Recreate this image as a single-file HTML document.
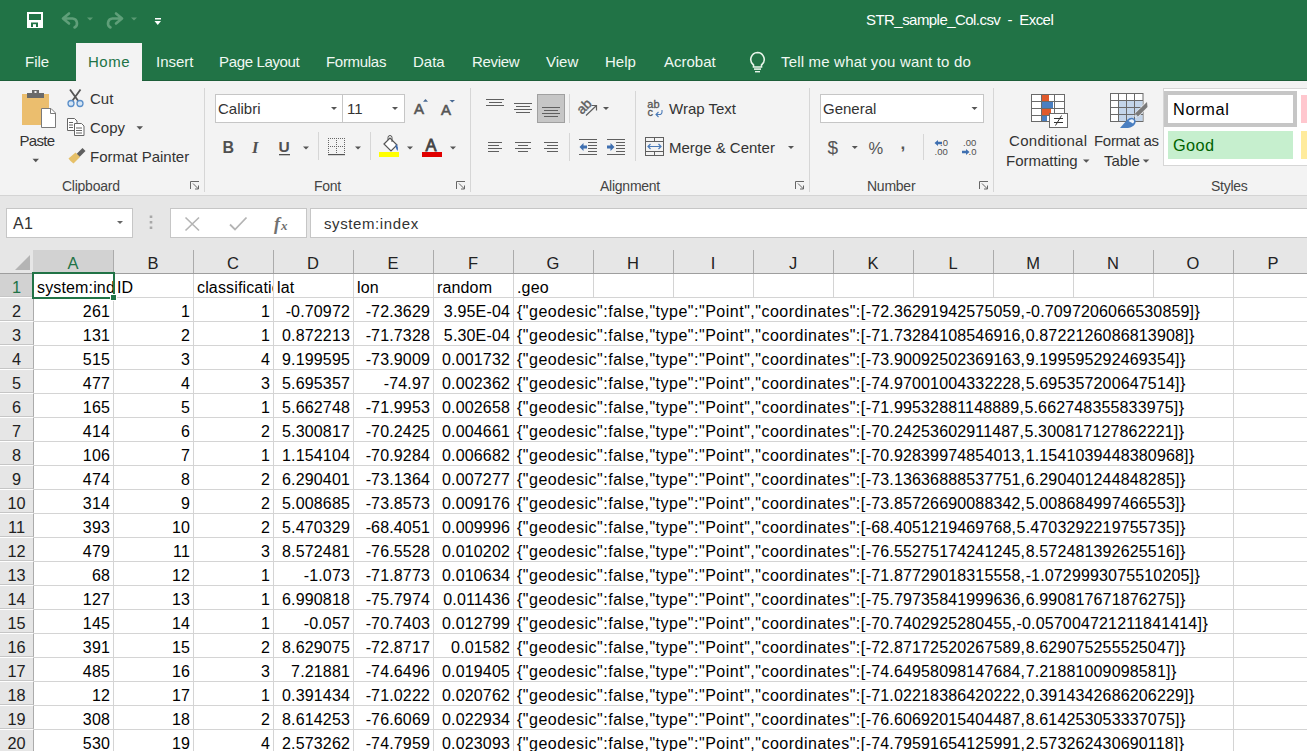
<!DOCTYPE html>
<html><head><meta charset="utf-8">
<style>
*{box-sizing:border-box;margin:0;padding:0}
html,body{width:1307px;height:751px;overflow:hidden;background:#fff;font-family:"Liberation Sans",sans-serif;position:relative}
.a{position:absolute;white-space:nowrap}
#title{position:absolute;left:0;top:0;width:1307px;height:81px;background:#217346}
#ribbon{position:absolute;left:0;top:81px;width:1307px;height:114px;background:#f3f3f3}
#rbline{position:absolute;left:0;top:195px;width:1307px;height:1px;background:#d4d4d4}
#fbar{position:absolute;left:0;top:196px;width:1307px;height:77px;background:#e6e6e6}
.tab{position:absolute;top:53px;font-size:15px;color:#f0f8f2;line-height:18px;white-space:nowrap}
.rt{position:absolute;font-size:15px;color:#333;line-height:18px;white-space:nowrap}
.gl{position:absolute;top:179px;font-size:14px;color:#444;line-height:14px;white-space:nowrap;letter-spacing:-0.25px}
.sep{position:absolute;width:1px;background:#d6d6d6}
.box{position:absolute;background:#fff;border:1px solid #c6c6c6}
.dd{position:absolute;width:0;height:0;border-left:4px solid transparent;border-right:4px solid transparent;border-top:4px solid #666}
/* grid */
.vl{position:absolute;width:1px;background:#d4d4d4}
.hl{position:absolute;left:33px;width:1274px;height:1px;background:#d4d4d4}
.hs{position:absolute;top:250px;width:1px;height:23px;background:#ababab}
.ch{position:absolute;top:250px;width:80px;height:23px;text-align:center;font-size:16.5px;line-height:16px;padding-top:4.5px;color:#222}
.ch.sel{background:#d2d2d2;color:#217346}
.rh{position:absolute;left:0;width:34px;height:23px;text-align:center;font-size:16.3px;line-height:16px;padding-top:4.5px;color:#222;background:#e6e6e6;border-bottom:1px solid #c6c6c6;border-right:1px solid #ababab}
.rh.sel{background:#d2d2d2;color:#217346}
.c{position:absolute;width:80px;height:23px;font-size:16px;letter-spacing:0.15px;line-height:16px;padding-top:7px;color:#000;white-space:nowrap;padding-left:4px;padding-right:3px}
.c.r{text-align:right}
.c.clip{overflow:hidden}
.c.geo{width:auto;letter-spacing:0.15px}
.ls{letter-spacing:0.5px}
.ls2{letter-spacing:0.6px}
</style></head><body>
<div id="title"></div>
<div id="ribbon"></div>
<div id="rbline"></div>
<div id="fbar"></div>

<!-- title bar -->
<div class="a" style="left:866px;top:11px;font-size:15px;color:#fff;letter-spacing:-0.55px;line-height:18px">STR_sample_Col.csv&nbsp; - &nbsp;Excel</div>

<!-- tabs -->
<div class="a" style="left:0;top:80px;width:1307px;height:1px;background:#1d5e39"></div>
<div class="a" style="left:76px;top:43px;width:66px;height:38px;background:#f3f3f3"></div>
<div class="tab" style="left:25px">File</div>
<div class="tab" style="left:88px;color:#217346;letter-spacing:0.5px">Home</div>
<div class="tab" style="left:156px">Insert</div>
<div class="tab" style="left:219px;letter-spacing:-0.35px">Page Layout</div>
<div class="tab" style="left:326px;letter-spacing:-0.3px">Formulas</div>
<div class="tab" style="left:413px">Data</div>
<div class="tab" style="left:472px;letter-spacing:-0.3px">Review</div>
<div class="tab" style="left:546px">View</div>
<div class="tab" style="left:605px">Help</div>
<div class="tab" style="left:664px">Acrobat</div>
<div class="tab" style="left:781px;letter-spacing:0.18px">Tell me what you want to do</div>

<!-- group labels -->
<div class="gl" style="left:62px">Clipboard</div>
<div class="gl" style="left:314px">Font</div>
<div class="gl" style="left:600px">Alignment</div>
<div class="gl" style="left:867px">Number</div>
<div class="gl" style="left:1211px">Styles</div>
<div class="sep" style="left:204px;top:88px;height:104px"></div>
<div class="sep" style="left:470px;top:88px;height:104px"></div>
<div class="sep" style="left:809px;top:88px;height:104px"></div>
<div class="sep" style="left:993px;top:88px;height:104px"></div>
<div class="sep" style="left:318px;top:132px;height:28px"></div>
<div class="sep" style="left:370px;top:132px;height:28px"></div>
<div class="sep" style="left:569px;top:94px;height:29px"></div>
<div class="sep" style="left:569px;top:133px;height:28px"></div>
<div class="sep" style="left:635px;top:91px;height:70px"></div>
<div class="sep" style="left:923px;top:134px;height:26px"></div>

<!-- clipboard -->
<div class="rt" style="left:19.5px;top:132px;letter-spacing:-0.7px">Paste</div>
<div class="rt" style="left:90px;top:90px">Cut</div>
<div class="rt" style="left:90px;top:119px">Copy</div>
<div class="rt" style="left:90px;top:148px">Format Painter</div>

<!-- font -->
<div class="box" style="left:215px;top:94px;width:128px;height:29px"></div>
<div class="box" style="left:342px;top:94px;width:63px;height:29px"></div>
<div class="rt" style="left:218px;top:100px">Calibri</div>
<div class="rt" style="left:347px;top:100px">11</div>

<!-- alignment -->
<div class="rt" style="left:669px;top:100px">Wrap Text</div>
<div class="rt" style="left:669px;top:139px">Merge &amp; Center</div>

<!-- number -->
<div class="box" style="left:820px;top:94px;width:164px;height:29px"></div>
<div class="rt" style="left:823px;top:100px">General</div>

<!-- styles -->
<div class="rt" style="left:1009px;top:132px;letter-spacing:0.3px">Conditional</div>
<div class="rt" style="left:1006px;top:152px">Formatting</div>
<div class="rt" style="left:1094px;top:132px;letter-spacing:-0.3px">Format as</div>
<div class="rt" style="left:1104px;top:152px">Table</div>

<!-- formula bar -->
<div class="box" style="left:6px;top:208px;width:127px;height:30px"></div>
<div class="rt" style="left:13px;top:214.5px;font-size:16px;letter-spacing:0.3px">A1</div>
<div class="box" style="left:170px;top:208px;width:137px;height:30px"></div>
<div class="box" style="left:310px;top:208px;width:1000px;height:30px"></div>
<div class="rt" style="left:324px;top:214.5px;font-size:15px;letter-spacing:0.6px">system:index</div>

<!-- styles gallery -->
<div class="a" style="left:1163px;top:88px;width:150px;height:78px;background:#fff;border:1px solid #d6d6d6"></div>
<div class="a" style="left:1164px;top:91px;width:133px;height:36px;background:#fff;border:4px solid #c6c6c6"></div>
<div class="rt" style="left:1173px;top:99.5px;font-size:16.3px;letter-spacing:0.7px;color:#000">Normal</div>
<div class="a" style="left:1168px;top:131px;width:125px;height:28px;background:#c6efce"></div>
<div class="rt" style="left:1173px;top:135.5px;font-size:16.3px;letter-spacing:0.4px;color:#006100">Good</div>
<div class="a" style="left:1301px;top:95px;width:6px;height:28px;background:#ffc7ce"></div>
<div class="a" style="left:1301px;top:131px;width:6px;height:28px;background:#ffeb9c"></div>

<svg class="a" style="left:0;top:0" width="1307" height="273" viewBox="0 0 1307 273">
<!-- QAT save -->
<rect x="27" y="12" width="16" height="16" fill="#fff"/>
<rect x="29" y="14" width="12" height="6" fill="#217346"/>
<rect x="31" y="22.5" width="7" height="4.5" fill="#217346"/>
<rect x="33" y="24.2" width="3" height="2.8" fill="#fff"/>
<!-- undo -->
<path d="M63 18.5 L69 13.5 M63 18.5 L69 23.5 M64 18.5 H72.5 A4.8 4.8 0 0 1 74.5 27.5" fill="none" stroke="#5f9f79" stroke-width="2.6" stroke-linecap="round"/>
<path d="M87 17.5 L93 17.5 L90 20.5Z" fill="#5a9a74"/>
<!-- redo -->
<path d="M122 18.5 L116 13.5 M122 18.5 L116 23.5 M121 18.5 H112.5 A4.8 4.8 0 0 0 110.5 27.5" fill="none" stroke="#5f9f79" stroke-width="2.6" stroke-linecap="round"/>
<path d="M131 17.5 L137 17.5 L134 20.5Z" fill="#5a9a74"/>
<!-- customize -->
<rect x="155" y="18" width="6" height="1.5" fill="#fff"/>
<path d="M154.5 21 L161 21 L157.75 25Z" fill="#fff"/>
<!-- lightbulb -->
<path d="M757.5 52.5 A7 7 0 0 1 761.5 65 V67 H753.5 V65 A7 7 0 0 1 757.5 52.5Z" fill="none" stroke="#e8f5ea" stroke-width="1.6"/>
<rect x="754" y="68.3" width="7" height="1.6" fill="#e8f5ea"/>
<rect x="755" y="71" width="5" height="1.4" fill="#e8f5ea"/>

<!-- Clipboard paste -->
<rect x="22" y="94" width="27" height="31" fill="#ebbe6e"/>
<rect x="27" y="93" width="17" height="5" fill="#6a6a6a"/>
<rect x="32" y="90" width="7" height="4" fill="#6a6a6a"/>
<rect x="34.5" y="91" width="2" height="2" fill="#f3f3f3"/>
<path d="M41.5 108.5 H51 L55.5 113 V127.5 H41.5Z" fill="#fff" stroke="#7a7a7a" stroke-width="1"/>
<path d="M50.5 108.5 V113.5 H55.5" fill="none" stroke="#7a7a7a" stroke-width="1"/>
<path d="M32.5 158.8 L39 158.8 L35.75 162.2Z" fill="#555"/>
<path d="M136.5 126.3 L143 126.3 L139.75 129.7Z" fill="#555"/>
<!-- scissors -->
<path d="M70 89.5 L79 102 M80.5 89.5 L71.5 102" stroke="#555" stroke-width="1.8" fill="none"/>
<circle cx="71" cy="103.5" r="3" fill="#d6e6f5" stroke="#5b8fc9" stroke-width="1.3"/>
<circle cx="80" cy="103.5" r="3" fill="#d6e6f5" stroke="#5b8fc9" stroke-width="1.3"/>
<!-- copy -->
<path d="M67.5 118.5 H74.5 L77 121 V130.5 H67.5Z" fill="#fff" stroke="#666" stroke-width="1"/>
<path d="M74.5 123.5 H81.5 L84 126 V135.5 H74.5Z" fill="#fff" stroke="#666" stroke-width="1"/>
<path d="M69 122.5 H73 M69 125 H73 M69 127.5 H73 M76 128 H82 M76 130.5 H82 M76 133 H82" stroke="#666" stroke-width="1"/>
<!-- format painter -->
<path d="M78 155.5 L84 149.5" stroke="#5f5f5f" stroke-width="4.2"/>
<path d="M68.5 158.5 L75.5 152.5 L80 157 L73.5 163.5 Q70 161 68.5 158.5Z" fill="#e6c068"/>

<!-- Font box arrows -->
<path d="M331 107 L337 107 L334 110Z" fill="#555"/>
<path d="M392 107 L398 107 L395 110Z" fill="#555"/>
<!-- grow / shrink -->
<text x="414" y="114.3" font-family="Liberation Sans" font-size="15" fill="#555" stroke="#555" stroke-width="0.6">A</text>
<path d="M423 101.8 L428 101.8 L425.5 99Z" fill="#4a6a94"/>
<text x="441" y="115" font-family="Liberation Sans" font-size="15" fill="#555" stroke="#555" stroke-width="0.6">A</text>
<path d="M449.5 100 L455 100 L452.25 102.5Z" fill="#4a6a94"/>
<!-- B I U -->
<text x="222.5" y="153" font-family="Liberation Sans" font-weight="bold" font-size="16" fill="#505050">B</text>
<text x="252" y="153" font-family="Liberation Serif" font-style="italic" font-weight="bold" font-size="16.5" fill="#505050">I</text>
<text x="278.5" y="152.3" font-family="Liberation Sans" font-weight="bold" font-size="15.5" fill="#505050">U</text>
<rect x="279" y="154" width="11" height="1.3" fill="#505050"/>
<path d="M303 146.5 L309 146.5 L306 149.5Z" fill="#555"/>
<!-- borders -->
<path d="M328 138.5 H346 M328 146.5 H346 M328.5 138 V154 M336.5 138 V154 M344.5 138 V154" stroke="#666" stroke-width="1" stroke-dasharray="1 1" fill="none"/>
<rect x="328" y="154" width="17" height="1.2" fill="#555"/>
<path d="M355 146.5 L361 146.5 L358 149.5Z" fill="#555"/>
<!-- fill color -->
<path d="M384 144 L390 138 L397 145 L391 151Z" fill="#fff" stroke="#555" stroke-width="1.2"/>
<path d="M388 140 V137.5 A2 2 0 0 1 392 137.5 V142" fill="none" stroke="#555" stroke-width="1"/>
<path d="M396 144 Q399 147 397.5 151 Q396 149 395.5 146Z" fill="#3e6db3"/>
<rect x="379" y="152" width="20" height="5" fill="#ffff00"/>
<path d="M407 146.5 L413 146.5 L410 149.5Z" fill="#555"/>
<!-- font color -->
<text x="425.5" y="151" font-family="Liberation Sans" font-size="16.5" fill="#444" stroke="#444" stroke-width="0.8">A</text>
<rect x="422" y="152" width="20" height="5" fill="#e00000"/>
<path d="M450 146.5 L456 146.5 L453 149.5Z" fill="#555"/>

<!-- launchers -->
<g fill="none" stroke="#666" stroke-width="1">
<path d="M190.5 189 V181.5 H199"/><path d="M193 183.5 L198.5 189 M198.5 185.5 V189 H195"/>
<path d="M456.5 189 V181.5 H465"/><path d="M459 183.5 L464.5 189 M464.5 185.5 V189 H461"/>
<path d="M795.5 189 V181.5 H804"/><path d="M798 183.5 L803.5 189 M803.5 185.5 V189 H800"/>
<path d="M979.5 189 V181.5 H988"/><path d="M982 183.5 L987.5 189 M987.5 185.5 V189 H984"/>
</g>

<!-- alignment -->
<g stroke="#5f5f5f" stroke-width="1.2" fill="none">
<path d="M486 99.5 H504 M489 102.5 H502 M486 105.5 H504"/>
<path d="M514 103.5 H532 M516 106.5 H530 M514 109.5 H532 M516 112.5 H530"/>
</g>
<rect x="537.5" y="94.5" width="27" height="28" fill="#c6c6c6" stroke="#a0a0a0" stroke-width="1"/>
<g stroke="#5f5f5f" stroke-width="1.2" fill="none">
<path d="M542 107.5 H560 M544 110.5 H558 M542 113.5 H560 M544 116.5 H558"/>
<path d="M488 142.5 H502 M488 145.5 H499 M488 148.5 H502 M488 151.5 H499"/>
<path d="M515 142.5 H531 M518 145.5 H528 M515 148.5 H531 M518 151.5 H528"/>
<path d="M544 142.5 H558 M547 145.5 H558 M544 148.5 H558 M547 151.5 H558"/>
<path d="M579 139.5 H597 M588 142.5 H597 M588 145.5 H597 M588 148.5 H597 M588 151.5 H597 M579 154.5 H597"/>
<path d="M607 139.5 H625 M616 142.5 H625 M616 145.5 H625 M616 148.5 H625 M616 151.5 H625 M607 154.5 H625"/>
<path d="M586 115.5 L596.5 105.5 M591.5 105.5 H596.5 V110.5"/>
</g>
<text x="0" y="0" font-family="Liberation Sans" font-size="13.5" fill="#5f5f5f" stroke="#5f5f5f" stroke-width="0.4" transform="translate(582 115) rotate(-45)">ab</text>
<path d="M603 107 L609 107 L606 110Z" fill="#555"/>
<path d="M579.5 147 L583.5 143 V145.5 H587 V148.5 H583.5 V151Z" fill="#3f6fb0"/>
<path d="M614.5 147 L610.5 143 V145.5 H607 V148.5 H610.5 V151Z" fill="#3f6fb0"/>
<!-- wrap text -->
<text x="647.3" y="107.8" font-family="Liberation Sans" font-size="11" fill="#555" stroke="#555" stroke-width="0.3">ab</text>
<text x="647.5" y="116" font-family="Liberation Sans" font-size="11" fill="#555" stroke="#555" stroke-width="0.3">c</text>
<path d="M662 110 V112 A2.5 2.5 0 0 1 659.5 114.5 H656 M658.5 112 L656 114.5 L658.5 117" fill="none" stroke="#4a7ab8" stroke-width="1.1"/>
<!-- merge -->
<g fill="none" stroke="#5f5f5f" stroke-width="1">
<rect x="645.5" y="137.5" width="18" height="18"/>
<path d="M645.5 141.5 H663.5 M645.5 151.5 H663.5 M654.5 137.5 V141.5 M654.5 151.5 V155.5"/>
</g>
<path d="M648 146.5 H661 M650.5 144 L648 146.5 L650.5 149 M658.5 144 L661 146.5 L658.5 149" fill="none" stroke="#4a7ab8" stroke-width="1.2"/>
<path d="M788 146 L794 146 L791 149Z" fill="#555"/>

<!-- number -->
<path d="M971.5 107 L977.5 107 L974.5 110Z" fill="#555"/>
<text x="827.5" y="154" font-family="Liberation Sans" font-size="19" fill="#555">$</text>
<path d="M851.8 146 L857.8 146 L854.8 149Z" fill="#555"/>
<text x="868.5" y="154" font-family="Liberation Sans" font-size="16.5" fill="#555">%</text>
<text x="900.5" y="149" font-family="Liberation Sans" font-weight="bold" font-size="17" fill="#555">,</text>
<text x="940" y="146" font-family="Liberation Sans" font-size="9.5" fill="#505050">.0</text>
<text x="934.5" y="155" font-family="Liberation Sans" font-size="9.5" fill="#505050">.00</text>
<path d="M934.5 143 L938 140 V141.8 H942 V144.2 H938 V146Z" fill="#3f6fb0"/>
<text x="963" y="146" font-family="Liberation Sans" font-size="9.5" fill="#505050">.00</text>
<text x="968.5" y="155" font-family="Liberation Sans" font-size="9.5" fill="#505050">.0</text>
<path d="M969.5 152 L966 149 V150.8 H962 V153.2 H966 V155Z" fill="#3f6fb0"/>

<!-- conditional formatting -->
<rect x="1031.5" y="94.5" width="33" height="27" fill="#fff" stroke="#6a6a6a" stroke-width="1"/>
<rect x="1042" y="95" width="7" height="6" fill="#e0592b"/>
<rect x="1042" y="102" width="11" height="6" fill="#4a7fc1"/>
<rect x="1042" y="109" width="9" height="6" fill="#e0592b"/>
<rect x="1042" y="116" width="5" height="5" fill="#4a7fc1"/>
<path d="M1031.5 101.5 H1064.5 M1031.5 108.5 H1064.5 M1031.5 115.5 H1064.5 M1041.5 94.5 V121.5 M1054.5 94.5 V121.5" fill="none" stroke="#6a6a6a" stroke-width="1"/>
<rect x="1049.5" y="113.5" width="18" height="14" fill="#fff" stroke="#6a6a6a" stroke-width="1"/>
<path d="M1054 118.5 H1063 M1054 122.5 H1063 M1061.5 115.5 L1055.5 125.5" fill="none" stroke="#333" stroke-width="1"/>
<path d="M1083 159.5 L1089.5 159.5 L1086.25 162.7Z" fill="#555"/>
<!-- format as table -->
<rect x="1110.5" y="93.5" width="32.5" height="28" fill="#fff" stroke="#6a6a6a" stroke-width="1"/>
<rect x="1119" y="101" width="23.5" height="20" fill="#c3d5ea"/>
<path d="M1110.5 100.5 H1143 M1110.5 107.5 H1143 M1110.5 114.5 H1143 M1118.5 93.5 V121.5 M1126.5 93.5 V121.5 M1134.5 93.5 V121.5" fill="none" stroke="#6a6a6a" stroke-width="1"/>
<path d="M1146.5 101.5 L1147.5 107.5 L1138.5 117 L1134.5 113.5Z" fill="#f3f3f3"/>
<path d="M1147 102 L1147.5 107 L1138 116.5 L1135 113.5Z" fill="#7a7a7a"/>
<path d="M1133.5 115 L1136.5 118" stroke="#f3f3f3" stroke-width="1"/>
<path d="M1120 128 L1127 120 Q1130 117 1133 118 Q1137 120 1135 124 Q1133 127 1128 128Z" fill="#4a7fc1"/>
<path d="M1128.5 121 Q1131 118.5 1133.3 119.7 Q1135 121.5 1133 123.5 Z" fill="#eef4fb"/>
<path d="M1142.8 159.5 L1149.3 159.5 L1146 162.7Z" fill="#555"/>

<!-- formula bar icons -->
<path d="M151 215.5 V218 M151 221 V223.5 M151 226.5 V229" stroke="#a8a8a8" stroke-width="2.6"/>
<path d="M185.5 217.5 L199 230.5 M199 217.5 L185.5 230.5" stroke="#b4b4b4" stroke-width="1.6"/>
<path d="M230 224.5 L235 229.5 L246.5 217.5" fill="none" stroke="#b4b4b4" stroke-width="1.8"/>
<text x="274" y="229.5" font-family="Liberation Serif" font-style="italic" font-weight="bold" font-size="18" fill="#707070">f</text>
<text x="281" y="230" font-family="Liberation Serif" font-style="italic" font-weight="bold" font-size="13" fill="#707070">x</text>
<path d="M117 221 L123 221 L120 224Z" fill="#666"/>

<!-- select all triangle -->
<path d="M15 270 L30 255 V270Z" fill="#b4b4b4"/>
</svg>


<!-- grid -->
<div class="hs" style="left:33px"></div>
<div class="vl" style="left:33px;top:274px;height:477px"></div>
<div class="hs" style="left:113px"></div>
<div class="vl" style="left:113px;top:274px;height:477px"></div>
<div class="hs" style="left:193px"></div>
<div class="vl" style="left:193px;top:274px;height:477px"></div>
<div class="hs" style="left:273px"></div>
<div class="vl" style="left:273px;top:274px;height:477px"></div>
<div class="hs" style="left:353px"></div>
<div class="vl" style="left:353px;top:274px;height:477px"></div>
<div class="hs" style="left:433px"></div>
<div class="vl" style="left:433px;top:274px;height:477px"></div>
<div class="hs" style="left:513px"></div>
<div class="vl" style="left:513px;top:274px;height:477px"></div>
<div class="hs" style="left:593px"></div>
<div class="vl" style="left:593px;top:274px;height:23px"></div>
<div class="hs" style="left:673px"></div>
<div class="vl" style="left:673px;top:274px;height:23px"></div>
<div class="hs" style="left:753px"></div>
<div class="vl" style="left:753px;top:274px;height:23px"></div>
<div class="hs" style="left:833px"></div>
<div class="vl" style="left:833px;top:274px;height:23px"></div>
<div class="hs" style="left:913px"></div>
<div class="vl" style="left:913px;top:274px;height:23px"></div>
<div class="hs" style="left:993px"></div>
<div class="vl" style="left:993px;top:274px;height:23px"></div>
<div class="hs" style="left:1073px"></div>
<div class="vl" style="left:1073px;top:274px;height:23px"></div>
<div class="hs" style="left:1153px"></div>
<div class="vl" style="left:1153px;top:274px;height:23px"></div>
<div class="hs" style="left:1233px"></div>
<div class="vl" style="left:1233px;top:274px;height:477px"></div>
<div class="hs" style="left:1313px"></div>
<div class="vl" style="left:1313px;top:274px;height:477px"></div>
<div class="hl" style="top:297px"></div>
<div class="hl" style="top:321px"></div>
<div class="hl" style="top:345px"></div>
<div class="hl" style="top:369px"></div>
<div class="hl" style="top:393px"></div>
<div class="hl" style="top:417px"></div>
<div class="hl" style="top:441px"></div>
<div class="hl" style="top:465px"></div>
<div class="hl" style="top:489px"></div>
<div class="hl" style="top:513px"></div>
<div class="hl" style="top:537px"></div>
<div class="hl" style="top:561px"></div>
<div class="hl" style="top:585px"></div>
<div class="hl" style="top:609px"></div>
<div class="hl" style="top:633px"></div>
<div class="hl" style="top:657px"></div>
<div class="hl" style="top:681px"></div>
<div class="hl" style="top:705px"></div>
<div class="hl" style="top:729px"></div>
<div class="hl" style="top:753px"></div>
<div class="a" style="left:0;top:273px;width:1307px;height:1px;background:#9e9e9e"></div>
<div class="ch sel" style="left:33px">A</div>
<div class="ch" style="left:113px">B</div>
<div class="ch" style="left:193px">C</div>
<div class="ch" style="left:273px">D</div>
<div class="ch" style="left:353px">E</div>
<div class="ch" style="left:433px">F</div>
<div class="ch" style="left:513px">G</div>
<div class="ch" style="left:593px">H</div>
<div class="ch" style="left:673px">I</div>
<div class="ch" style="left:753px">J</div>
<div class="ch" style="left:833px">K</div>
<div class="ch" style="left:913px">L</div>
<div class="ch" style="left:993px">M</div>
<div class="ch" style="left:1073px">N</div>
<div class="ch" style="left:1153px">O</div>
<div class="ch" style="left:1233px">P</div>
<div class="rh sel" style="top:274px">1</div>
<div class="rh" style="top:298px">2</div>
<div class="rh" style="top:322px">3</div>
<div class="rh" style="top:346px">4</div>
<div class="rh" style="top:370px">5</div>
<div class="rh" style="top:394px">6</div>
<div class="rh" style="top:418px">7</div>
<div class="rh" style="top:442px">8</div>
<div class="rh" style="top:466px">9</div>
<div class="rh" style="top:490px">10</div>
<div class="rh" style="top:514px">11</div>
<div class="rh" style="top:538px">12</div>
<div class="rh" style="top:562px">13</div>
<div class="rh" style="top:586px">14</div>
<div class="rh" style="top:610px">15</div>
<div class="rh" style="top:634px">16</div>
<div class="rh" style="top:658px">17</div>
<div class="rh" style="top:682px">18</div>
<div class="rh" style="top:706px">19</div>
<div class="rh" style="top:730px">20</div>
<div class="c l clip" style="left:33px;top:273px">system:index</div>
<div class="c l clip" style="left:113px;top:273px">ID</div>
<div class="c l clip" style="left:193px;top:273px">classification</div>
<div class="c l clip" style="left:273px;top:273px">lat</div>
<div class="c l clip" style="left:353px;top:273px">lon</div>
<div class="c l clip" style="left:433px;top:273px">random</div>
<div class="c l" style="left:513px;top:273px">.geo</div>
<div class="c r" style="left:33px;top:297px">261</div>
<div class="c r" style="left:113px;top:297px">1</div>
<div class="c r" style="left:193px;top:297px">1</div>
<div class="c r" style="left:273px;top:297px">-0.70972</div>
<div class="c r" style="left:353px;top:297px">-72.3629</div>
<div class="c r" style="left:433px;top:297px">3.95E-04</div>
<div class="c l geo" style="left:513px;top:297px"><span class="ls">{"geodesic":false,"type":"Point","coordinates":[</span>-72.36291942575059<span class="ls2">,</span>-0.7097206066530859<span class="ls2">]}</span></div>
<div class="c r" style="left:33px;top:321px">131</div>
<div class="c r" style="left:113px;top:321px">2</div>
<div class="c r" style="left:193px;top:321px">1</div>
<div class="c r" style="left:273px;top:321px">0.872213</div>
<div class="c r" style="left:353px;top:321px">-71.7328</div>
<div class="c r" style="left:433px;top:321px">5.30E-04</div>
<div class="c l geo" style="left:513px;top:321px"><span class="ls">{"geodesic":false,"type":"Point","coordinates":[</span>-71.73284108546916<span class="ls2">,</span>0.8722126086813908<span class="ls2">]}</span></div>
<div class="c r" style="left:33px;top:345px">515</div>
<div class="c r" style="left:113px;top:345px">3</div>
<div class="c r" style="left:193px;top:345px">4</div>
<div class="c r" style="left:273px;top:345px">9.199595</div>
<div class="c r" style="left:353px;top:345px">-73.9009</div>
<div class="c r" style="left:433px;top:345px">0.001732</div>
<div class="c l geo" style="left:513px;top:345px"><span class="ls">{"geodesic":false,"type":"Point","coordinates":[</span>-73.90092502369163<span class="ls2">,</span>9.199595292469354<span class="ls2">]}</span></div>
<div class="c r" style="left:33px;top:369px">477</div>
<div class="c r" style="left:113px;top:369px">4</div>
<div class="c r" style="left:193px;top:369px">3</div>
<div class="c r" style="left:273px;top:369px">5.695357</div>
<div class="c r" style="left:353px;top:369px">-74.97</div>
<div class="c r" style="left:433px;top:369px">0.002362</div>
<div class="c l geo" style="left:513px;top:369px"><span class="ls">{"geodesic":false,"type":"Point","coordinates":[</span>-74.97001004332228<span class="ls2">,</span>5.695357200647514<span class="ls2">]}</span></div>
<div class="c r" style="left:33px;top:393px">165</div>
<div class="c r" style="left:113px;top:393px">5</div>
<div class="c r" style="left:193px;top:393px">1</div>
<div class="c r" style="left:273px;top:393px">5.662748</div>
<div class="c r" style="left:353px;top:393px">-71.9953</div>
<div class="c r" style="left:433px;top:393px">0.002658</div>
<div class="c l geo" style="left:513px;top:393px"><span class="ls">{"geodesic":false,"type":"Point","coordinates":[</span>-71.99532881148889<span class="ls2">,</span>5.662748355833975<span class="ls2">]}</span></div>
<div class="c r" style="left:33px;top:417px">414</div>
<div class="c r" style="left:113px;top:417px">6</div>
<div class="c r" style="left:193px;top:417px">2</div>
<div class="c r" style="left:273px;top:417px">5.300817</div>
<div class="c r" style="left:353px;top:417px">-70.2425</div>
<div class="c r" style="left:433px;top:417px">0.004661</div>
<div class="c l geo" style="left:513px;top:417px"><span class="ls">{"geodesic":false,"type":"Point","coordinates":[</span>-70.24253602911487<span class="ls2">,</span>5.300817127862221<span class="ls2">]}</span></div>
<div class="c r" style="left:33px;top:441px">106</div>
<div class="c r" style="left:113px;top:441px">7</div>
<div class="c r" style="left:193px;top:441px">1</div>
<div class="c r" style="left:273px;top:441px">1.154104</div>
<div class="c r" style="left:353px;top:441px">-70.9284</div>
<div class="c r" style="left:433px;top:441px">0.006682</div>
<div class="c l geo" style="left:513px;top:441px"><span class="ls">{"geodesic":false,"type":"Point","coordinates":[</span>-70.92839974854013<span class="ls2">,</span>1.1541039448380968<span class="ls2">]}</span></div>
<div class="c r" style="left:33px;top:465px">474</div>
<div class="c r" style="left:113px;top:465px">8</div>
<div class="c r" style="left:193px;top:465px">2</div>
<div class="c r" style="left:273px;top:465px">6.290401</div>
<div class="c r" style="left:353px;top:465px">-73.1364</div>
<div class="c r" style="left:433px;top:465px">0.007277</div>
<div class="c l geo" style="left:513px;top:465px"><span class="ls">{"geodesic":false,"type":"Point","coordinates":[</span>-73.13636888537751<span class="ls2">,</span>6.290401244848285<span class="ls2">]}</span></div>
<div class="c r" style="left:33px;top:489px">314</div>
<div class="c r" style="left:113px;top:489px">9</div>
<div class="c r" style="left:193px;top:489px">2</div>
<div class="c r" style="left:273px;top:489px">5.008685</div>
<div class="c r" style="left:353px;top:489px">-73.8573</div>
<div class="c r" style="left:433px;top:489px">0.009176</div>
<div class="c l geo" style="left:513px;top:489px"><span class="ls">{"geodesic":false,"type":"Point","coordinates":[</span>-73.85726690088342<span class="ls2">,</span>5.008684997466553<span class="ls2">]}</span></div>
<div class="c r" style="left:33px;top:513px">393</div>
<div class="c r" style="left:113px;top:513px">10</div>
<div class="c r" style="left:193px;top:513px">2</div>
<div class="c r" style="left:273px;top:513px">5.470329</div>
<div class="c r" style="left:353px;top:513px">-68.4051</div>
<div class="c r" style="left:433px;top:513px">0.009996</div>
<div class="c l geo" style="left:513px;top:513px"><span class="ls">{"geodesic":false,"type":"Point","coordinates":[</span>-68.4051219469768<span class="ls2">,</span>5.4703292219755735<span class="ls2">]}</span></div>
<div class="c r" style="left:33px;top:537px">479</div>
<div class="c r" style="left:113px;top:537px">11</div>
<div class="c r" style="left:193px;top:537px">3</div>
<div class="c r" style="left:273px;top:537px">8.572481</div>
<div class="c r" style="left:353px;top:537px">-76.5528</div>
<div class="c r" style="left:433px;top:537px">0.010202</div>
<div class="c l geo" style="left:513px;top:537px"><span class="ls">{"geodesic":false,"type":"Point","coordinates":[</span>-76.55275174241245<span class="ls2">,</span>8.572481392625516<span class="ls2">]}</span></div>
<div class="c r" style="left:33px;top:561px">68</div>
<div class="c r" style="left:113px;top:561px">12</div>
<div class="c r" style="left:193px;top:561px">1</div>
<div class="c r" style="left:273px;top:561px">-1.073</div>
<div class="c r" style="left:353px;top:561px">-71.8773</div>
<div class="c r" style="left:433px;top:561px">0.010634</div>
<div class="c l geo" style="left:513px;top:561px"><span class="ls">{"geodesic":false,"type":"Point","coordinates":[</span>-71.87729018315558<span class="ls2">,</span>-1.0729993075510205<span class="ls2">]}</span></div>
<div class="c r" style="left:33px;top:585px">127</div>
<div class="c r" style="left:113px;top:585px">13</div>
<div class="c r" style="left:193px;top:585px">1</div>
<div class="c r" style="left:273px;top:585px">6.990818</div>
<div class="c r" style="left:353px;top:585px">-75.7974</div>
<div class="c r" style="left:433px;top:585px">0.011436</div>
<div class="c l geo" style="left:513px;top:585px"><span class="ls">{"geodesic":false,"type":"Point","coordinates":[</span>-75.79735841999636<span class="ls2">,</span>6.990817671876275<span class="ls2">]}</span></div>
<div class="c r" style="left:33px;top:609px">145</div>
<div class="c r" style="left:113px;top:609px">14</div>
<div class="c r" style="left:193px;top:609px">1</div>
<div class="c r" style="left:273px;top:609px">-0.057</div>
<div class="c r" style="left:353px;top:609px">-70.7403</div>
<div class="c r" style="left:433px;top:609px">0.012799</div>
<div class="c l geo" style="left:513px;top:609px"><span class="ls">{"geodesic":false,"type":"Point","coordinates":[</span>-70.7402925280455<span class="ls2">,</span>-0.057004721211841414<span class="ls2">]}</span></div>
<div class="c r" style="left:33px;top:633px">391</div>
<div class="c r" style="left:113px;top:633px">15</div>
<div class="c r" style="left:193px;top:633px">2</div>
<div class="c r" style="left:273px;top:633px">8.629075</div>
<div class="c r" style="left:353px;top:633px">-72.8717</div>
<div class="c r" style="left:433px;top:633px">0.01582</div>
<div class="c l geo" style="left:513px;top:633px"><span class="ls">{"geodesic":false,"type":"Point","coordinates":[</span>-72.87172520267589<span class="ls2">,</span>8.629075255525047<span class="ls2">]}</span></div>
<div class="c r" style="left:33px;top:657px">485</div>
<div class="c r" style="left:113px;top:657px">16</div>
<div class="c r" style="left:193px;top:657px">3</div>
<div class="c r" style="left:273px;top:657px">7.21881</div>
<div class="c r" style="left:353px;top:657px">-74.6496</div>
<div class="c r" style="left:433px;top:657px">0.019405</div>
<div class="c l geo" style="left:513px;top:657px"><span class="ls">{"geodesic":false,"type":"Point","coordinates":[</span>-74.64958098147684<span class="ls2">,</span>7.21881009098581<span class="ls2">]}</span></div>
<div class="c r" style="left:33px;top:681px">12</div>
<div class="c r" style="left:113px;top:681px">17</div>
<div class="c r" style="left:193px;top:681px">1</div>
<div class="c r" style="left:273px;top:681px">0.391434</div>
<div class="c r" style="left:353px;top:681px">-71.0222</div>
<div class="c r" style="left:433px;top:681px">0.020762</div>
<div class="c l geo" style="left:513px;top:681px"><span class="ls">{"geodesic":false,"type":"Point","coordinates":[</span>-71.02218386420222<span class="ls2">,</span>0.3914342686206229<span class="ls2">]}</span></div>
<div class="c r" style="left:33px;top:705px">308</div>
<div class="c r" style="left:113px;top:705px">18</div>
<div class="c r" style="left:193px;top:705px">2</div>
<div class="c r" style="left:273px;top:705px">8.614253</div>
<div class="c r" style="left:353px;top:705px">-76.6069</div>
<div class="c r" style="left:433px;top:705px">0.022934</div>
<div class="c l geo" style="left:513px;top:705px"><span class="ls">{"geodesic":false,"type":"Point","coordinates":[</span>-76.60692015404487<span class="ls2">,</span>8.614253053337075<span class="ls2">]}</span></div>
<div class="c r" style="left:33px;top:729px">530</div>
<div class="c r" style="left:113px;top:729px">19</div>
<div class="c r" style="left:193px;top:729px">4</div>
<div class="c r" style="left:273px;top:729px">2.573262</div>
<div class="c r" style="left:353px;top:729px">-74.7959</div>
<div class="c r" style="left:433px;top:729px">0.023093</div>
<div class="c l geo" style="left:513px;top:729px"><span class="ls">{"geodesic":false,"type":"Point","coordinates":[</span>-74.79591654125991<span class="ls2">,</span>2.573262430690118<span class="ls2">]}</span></div>
<!-- selection -->
<div class="a" style="left:32px;top:272px;width:83px;height:27px;border:2px solid #217346"></div>
<div class="a" style="left:110px;top:294px;width:7px;height:7px;background:#217346;border:1px solid #fff"></div>

</body></html>
